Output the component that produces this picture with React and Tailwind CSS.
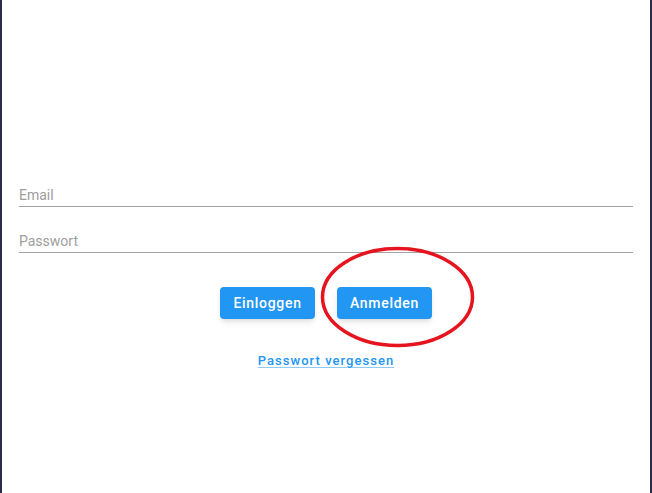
const App = () => {
  return (
    <div
      className="relative min-h-[493px] bg-white border-l-2 border-r-2 border-[#2a2a52] flex flex-col px-[17px] pt-[185px]"
      style={{ fontFamily: "Roboto, 'Liberation Sans', sans-serif" }}
    >
      <div className="border-b border-[#a3a3a3] pb-px text-sm leading-5 text-[#9e9e9e]">
        Email
      </div>
      <div className="mt-6 border-b border-[#a3a3a3] pb-px text-sm leading-5 text-[#9e9e9e]">
        Passwort
      </div>
      <div className="mt-[34px] flex justify-center gap-[22px]">
        <button className="h-8 w-[95px] rounded bg-[#2196f3] text-sm font-medium tracking-[0.05em] text-white shadow-md">
          Einloggen
        </button>
        <button className="h-8 w-[95px] rounded bg-[#2196f3] text-sm font-medium tracking-[0.05em] text-white shadow-md">
          Anmelden
        </button>
      </div>
      <div className="mt-[32px] flex justify-center">
        <a className="text-[13px] leading-5 font-medium tracking-[0.08em] text-[#2196f3] underline decoration-[#90caf9] underline-offset-2">
          Passwort vergessen
        </a>
      </div>
      {/* red annotation ring */}
      <svg
        className="absolute left-[316px] top-[245px]"
        width="160"
        height="106"
        viewBox="0 0 160 106"
      >
        <ellipse
          cx="79.5"
          cy="52"
          rx="75"
          ry="48.5"
          fill="none"
          stroke="#e5141f"
          strokeWidth="3.5"
        />
      </svg>
    </div>
  );
};

export default App;
